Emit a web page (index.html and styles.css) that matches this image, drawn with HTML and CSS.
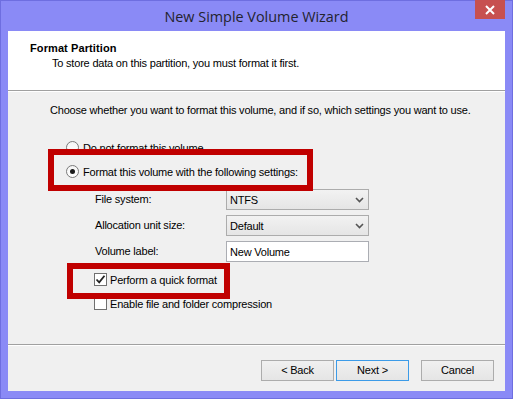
FILE: index.html
```html
<!DOCTYPE html>
<html>
<head>
<meta charset="utf-8">
<link rel="stylesheet" href="styles.css">
</head>
<body>
<div class="window">
  <div class="titlebar">
    <div></div>
    <div class="title">New Simple Volume Wizard</div>
    <div class="tb-right"><div class="close"><svg width="10" height="10" viewBox="0 0 10 10"><path d="M1 1L9 9M9 1L1 9" stroke="#fff" stroke-width="2"/></svg></div></div>
  </div>
  <div class="client">
    <div class="header">
      <div class="h-title">Format Partition</div>
      <div class="h-sub">To store data on this partition, you must format it first.</div>
    </div>
    <div class="body">
      <div class="intro">Choose whether you want to format this volume, and if so, which settings you want to use.</div>
      <div class="radio-row r1"><span class="radio"></span><span>Do not format this volume</span></div>
      <div class="radio-row r2"><span class="radio checked"><span class="dot"></span></span><span>Format this volume with the following settings:</span></div>
      <div class="settings">
        <div class="lbl">File system:</div>
        <div class="select"><span>NTFS</span><svg width="9" height="6" viewBox="0 0 9 6"><path d="M1 1L4.5 4.5L8 1" stroke="#555" stroke-width="1.6" fill="none"/></svg></div>
        <div class="lbl">Allocation unit size:</div>
        <div class="select"><span>Default</span><svg width="9" height="6" viewBox="0 0 9 6"><path d="M1 1L4.5 4.5L8 1" stroke="#555" stroke-width="1.6" fill="none"/></svg></div>
        <div class="lbl">Volume label:</div>
        <div class="input">New Volume</div>
      </div>
      <div class="check-row c1"><span class="check"><svg width="11" height="11" viewBox="0 0 11 11"><path d="M1.5 5.5L4.2 8.3L9.5 1.8" stroke="#222" stroke-width="1.8" fill="none"/></svg></span><span>Perform a quick format</span></div>
      <div class="check-row c2"><span class="check"></span><span>Enable file and folder compression</span></div>
    </div>
    <div class="footer">
      <div class="btn">&lt; Back</div>
      <div class="btn default">Next &gt;</div>
      <div class="btn cancel">Cancel</div>
    </div>
  </div>
  <div class="mark mark1"></div>
  <div class="mark mark2"></div>
</div>
</body>
</html>
```
FILE: styles.css
```css
* { box-sizing: border-box; }
html, body { margin: 0; padding: 0; }
body { width: 513px; height: 399px; overflow: hidden; }
.window {
  position: relative;
  width: 513px; height: 399px;
  background: #8a8af6;
  border: 1px solid #6e6ee0;
  padding: 0 7px 7px 7px;
  display: flex; flex-direction: column;
}
.titlebar {
  height: 30px;
  display: grid;
  grid-template-columns: 1fr auto 1fr;
  align-items: start;
}
.title {
  font-family: "Open Sans", "Noto Sans", sans-serif;
  font-size: 14.4px;
  color: #23232e;
  line-height: 30px;
  padding-top: 1px;
}
.tb-right { display: flex; justify-content: flex-end; }
.close {
  width: 30px; height: 19px;
  background: #c75050;
  display: flex; align-items: center; justify-content: center;
  margin-top: -1px;
}
.client {
  flex: 1;
  background: #f0f0f0;
  display: flex; flex-direction: column;
  font-family: "Liberation Sans", Arial, sans-serif;
  font-size: 11px;
  letter-spacing: -0.2px;
  color: #000;
}
.header {
  height: 60px;
  background: #fff;
  border-bottom: 1px solid #a0a0a0;
  padding: 11px 0 0 22px;
}
.h-title { font-weight: bold; font-size: 11px; line-height: 13px; letter-spacing: 0.1px; }
.h-sub { padding-left: 22px; line-height: 13px; margin-top: 2px; }
.body {
  flex: 1;
  border-top: 1px solid #fff;
  border-bottom: 1px solid #a0a0a0;
  padding: 12px 0 0 42px;
  position: relative;
}
.intro { line-height: 13px; }
.radio-row { display: flex; align-items: center; gap: 4px; margin-left: 16px; height: 13px; }
.r1 { margin-top: 24px; }
.r2 { margin-top: 11px; }
.radio {
  width: 13px; height: 13px; border-radius: 50%;
  border: 1px solid #7a7a7a;
  background: linear-gradient(#f4f4f4, #fff);
  display: flex; align-items: center; justify-content: center;
}
.dot { width: 5px; height: 5px; border-radius: 50%; background: #1a1a1a; }
.settings {
  display: grid;
  grid-template-columns: 131px 143px;
  row-gap: 5px;
  margin: 11px 0 0 45px;
  align-items: center;
}
.lbl { line-height: 13px; }
.select, .input {
  height: 21px;
  border: 1px solid #acacac;
  display: flex; align-items: center;
  padding: 0 4px 0 3px;
}
.select {
  background: linear-gradient(#f2f2f2, #e5e5e5);
  justify-content: space-between;
}
.input { background: #fff; border-color: #abadb3; }
.check-row { display: flex; align-items: center; gap: 3px; margin-left: 44px; height: 13px; }
.c1 { margin-top: 11px; }
.c2 { margin-top: 11px; }
.check {
  width: 13px; height: 13px;
  border: 1px solid #707070;
  background: #fff;
  display: flex; align-items: center; justify-content: center;
}
.footer {
  height: 46px;
  border-top: 1px solid #fff;
  display: flex;
  justify-content: flex-end;
  padding: 14px 11px 0 0;
  gap: 2px;
}
.btn {
  width: 73px; height: 21px;
  border: 1px solid #acacac;
  background: linear-gradient(#f0f0f0, #e5e5e5);
  display: flex; align-items: center; justify-content: center;
  line-height: 13px;
}
.btn.default { border-color: #3c9be8; }
.btn.cancel { margin-left: 10px; }
.mark {
  position: absolute;
  border: 6px solid #c00000;
}
.mark1 { left: 47px; top: 148px; width: 265px; height: 42px; }
.mark2 { left: 66px; top: 262px; width: 163px; height: 36px; }
```
